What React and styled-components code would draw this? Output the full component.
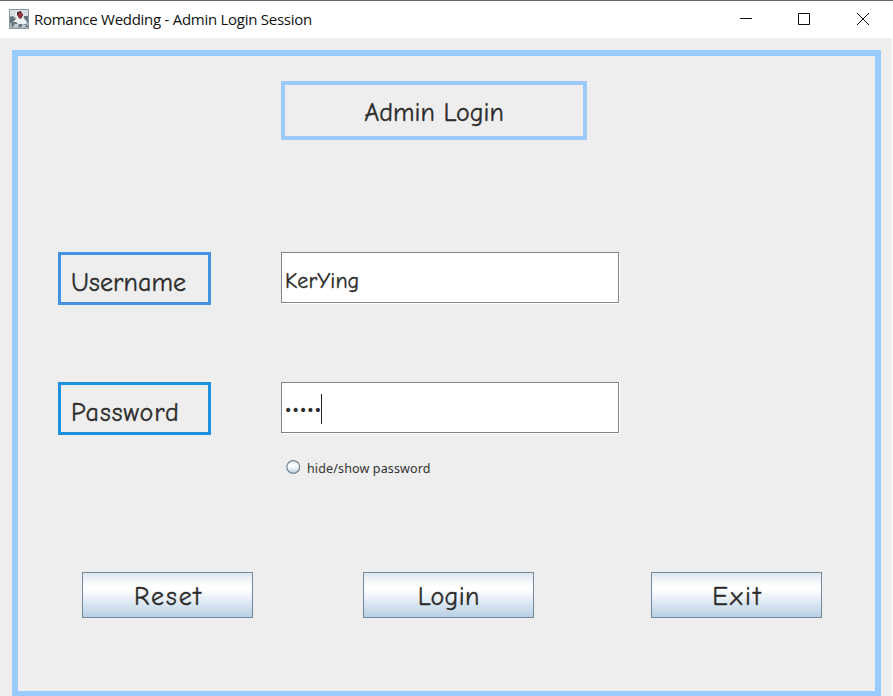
import React from "react";
import styled, { createGlobalStyle } from "styled-components";

const GlobalStyle = createGlobalStyle`
  * { box-sizing: border-box; }
  body { margin: 0; overflow: hidden; background: #fff; }
`;

const Window = styled.main`
  display: flex;
  flex-direction: column;
  width: 893px;
  height: 696px;
  overflow: hidden;
  border-top: 1px solid #686868;
  background: #fff;
  color: #2b2b2b;
`;

const TitleBar = styled.header`
  display: flex;
  flex: none;
  align-items: center;
  height: 37px;
  padding: 0 1px 1px 9px;
`;

const Title = styled.h1`
  flex: 1;
  margin: 0 0 1px 5px;
  font: 400 15px/20px "Open Sans", "Noto Sans", sans-serif;
  letter-spacing: ${(p) => p.$spacing}px;
  color: #111;
  white-space: nowrap;
`;

const WindowControl = styled.button`
  display: grid;
  place-items: center;
  width: 58.5px;
  height: 37px;
  padding: 0;
  border: 0;
  background: none;
`;

const Client = styled.div`
  flex: none;
  width: 892px;
  height: 660px;
  padding: 12px 11px 0 12px;
  background: #eee;
`;

const Panel = styled.form`
  height: 647px;
  padding-top: 25px;
  border: 6px solid #99ccfc;
`;

const Heading = styled.h2`
  display: flex;
  align-items: center;
  justify-content: center;
  width: 306px;
  height: 59px;
  margin: 0 0 112px 263px;
  padding: 5px 0 0;
  border: 4px solid #9dcaf8;
`;

const Script = styled.span`
  font: 400 ${(p) => p.$size || 26}px/36px "Comic Sans MS", "Comic Neue", Lato, sans-serif;
  letter-spacing: ${(p) => p.$spacing || 0}px;
  margin-right: ${(p) => -(p.$spacing || 0)}px;
  -webkit-text-stroke: 0.35px currentColor;
  white-space: nowrap;
`;

const FieldRow = styled.div`
  display: flex;
  align-items: flex-start;
  gap: 70px;
  height: 53px;
  margin: 0 0 ${(p) => p.$after}px 40px;
`;

const FieldLabel = styled.label`
  display: flex;
  align-items: center;
  width: 153px;
  height: 53px;
  padding: 8px 0 0 10px;
  border: 3px solid ${(p) => p.$color};
`;

const TextField = styled.div`
  display: flex;
  align-items: center;
  width: 338px;
  height: 51px;
  padding: 7px 0 0 3px;
  border: 1px solid #7e858c;
  background: #fff;
  box-shadow: 1px 1px 0 #fff;
`;

const Mask = styled.span`
  font: 400 14px/30px "DejaVu Sans", sans-serif;
  letter-spacing: -0.8px;
  margin: -3px 0 0 -1px;
`;

const Caret = styled.span`
  width: 1px;
  height: 30px;
  margin: -5px 0 0 0;
  background: #222;
`;

const RevealOption = styled.label`
  display: flex;
  align-items: center;
  gap: 6px;
  height: 16px;
  margin: 0 0 97px 268px;
  font: 400 12.5px/16px "Noto Sans", sans-serif;
  letter-spacing: 0.14px;
  color: #333;
`;

const RevealText = styled.span`
  padding-top: 3px;
`;

const Actions = styled.div`
  display: flex;
  margin-left: 64px;
`;

const ActionButton = styled.button`
  display: flex;
  align-items: center;
  justify-content: center;
  flex: none;
  width: 171px;
  height: 46px;
  margin-right: ${(p) => p.$after || 0}px;
  padding: 4px 0 0;
  border: 1px solid #75879a;
  background: linear-gradient(#dce7f1 0%, #fff 30%, #fff 38%, #b8cfe5 100%);
  color: #2b2b2b;
`;

const JavaIcon = () => (
  <svg width="20" height="20" viewBox="0 0 20 20">
    <rect width="20" height="20" fill="#aab5be" />
    <path d="M0 0h20v8H0z" fill="#d6dde2" />
    <path d="M0 8l4-1 3 4-3 3H0zm15-1h5v6l-5 1z" fill="#64727c" />
    <path d="M6 4l3-3 5 2v5l4 5-3 4H5l-2-3 4-4z" fill="#edf0f2" />
    <path d="M8 3l4-1 2 4-2 4-2-1-2-3z" fill="#4b2b32" />
    <path d="M10 4l3 0 1 2-2 3-3-2z" fill="#9c3641" />
    <path d="M2 13h5l2 2h8l3 3H3z" fill="#697780" />
    <path d="M6 15h4l-1 3H4zm7 0l4 1-1 2h-3z" fill="#c8d0d5" />
    <path d="M.5.5h19v19H.5z" fill="none" stroke="#8b979f" />
  </svg>
);

const ControlIcon = ({ path }) => (
  <svg width="14" height="14" viewBox="0 0 14 14" fill="none" stroke="#111">
    <path d={path} />
  </svg>
);

const RadioIcon = () => (
  <svg width="15" height="15" viewBox="0 0 15 15">
    <defs>
      <linearGradient id="radioFill" x1="0" y1="0" x2="0" y2="1">
        <stop offset="0" stopColor="#dce7f1" />
        <stop offset=".4" stopColor="#fff" />
        <stop offset="1" stopColor="#b8cfe5" />
      </linearGradient>
    </defs>
    <circle cx="7.2" cy="7" r="6.4" fill="url(#radioFill)" stroke="#748493" strokeWidth="1.2" />
  </svg>
);

export default function App() {
  return (
    <>
      <GlobalStyle />
      <Window>
        <TitleBar>
          <JavaIcon />
          <Title $spacing={-0.27}>Romance Wedding - Admin Login Session</Title>
          <WindowControl type="button" aria-label="Minimize"><ControlIcon path="M1 6.5h12" /></WindowControl>
          <WindowControl type="button" aria-label="Maximize"><ControlIcon path="M1.5 1.5h11v11h-11z" /></WindowControl>
          <WindowControl type="button" aria-label="Close"><ControlIcon path="M1 1l12 12M13 1L1 13" /></WindowControl>
        </TitleBar>
        <Client>
          <Panel>
            <Heading><Script>Admin Login</Script></Heading>
            <FieldRow $after={77}>
              <FieldLabel $color="#4392e0"><Script $spacing={0.1}>Username</Script></FieldLabel>
              <TextField><Script $size={22} $spacing={0.05}>KerYing</Script></TextField>
            </FieldRow>
            <FieldRow $after={24}>
              <FieldLabel $color="#1c91dc"><Script $spacing={1}>Password</Script></FieldLabel>
              <TextField><Mask>•••••</Mask><Caret /></TextField>
            </FieldRow>
            <RevealOption><RadioIcon /><RevealText>hide/show password</RevealText></RevealOption>
            <Actions>
              <ActionButton type="button" $after={110}><Script $spacing={1.9}>Reset</Script></ActionButton>
              <ActionButton type="button" $after={117}><Script $spacing={0.3}>Login</Script></ActionButton>
              <ActionButton type="button"><Script $spacing={2.4}>Exit</Script></ActionButton>
            </Actions>
          </Panel>
        </Client>
      </Window>
    </>
  );
}
